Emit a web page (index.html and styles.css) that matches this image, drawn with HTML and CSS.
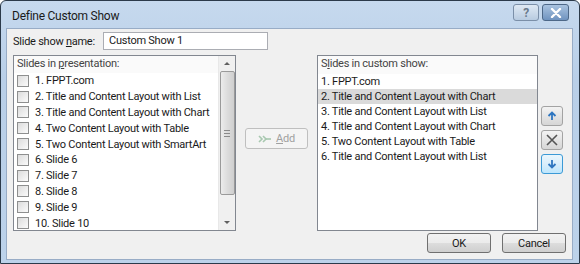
FILE: index.html
```html
<!DOCTYPE html>
<html lang="en">

<head>
    <meta charset="UTF-8">
    <title>Define Custom Show</title>
    <link rel="stylesheet" href="styles.css">
</head>

<body>
    <div class="window">
        <div class="titlebar">
            <span class="title">Define Custom Show</span>
            <div class="title-buttons">
                <span class="tb-btn tb-help">?</span>
                <span class="tb-btn tb-close">
                    <svg width="12" height="10" viewBox="0 0 12 10">
                        <path d="M2 1 L10 9 M10 1 L2 9" stroke="#fff" stroke-width="2.4" stroke-linecap="round" />
                    </svg>
                </span>
            </div>
        </div>

        <div class="client">
            <div class="name-row">
                <label class="name-label">Slide show <u>n</u>ame:</label>
                <div class="name-input">Custom Show 1</div>
            </div>

            <div class="main-row">
                <div class="listbox left-list">
                    <div class="list-content">
                        <div class="list-header">Slides in <u>p</u>resentation:</div>
                        <div class="check-item"><span class="check"></span>1. FPPT.com</div>
                        <div class="check-item"><span class="check"></span>2. Title and Content Layout with List</div>
                        <div class="check-item"><span class="check"></span>3. Title and Content Layout with Chart</div>
                        <div class="check-item"><span class="check"></span>4. Two Content Layout with Table</div>
                        <div class="check-item"><span class="check"></span>5. Two Content Layout with SmartArt</div>
                        <div class="check-item"><span class="check"></span>6. Slide 6</div>
                        <div class="check-item"><span class="check"></span>7. Slide 7</div>
                        <div class="check-item"><span class="check"></span>8. Slide 8</div>
                        <div class="check-item"><span class="check"></span>9. Slide 9</div>
                        <div class="check-item"><span class="check"></span>10. Slide 10</div>
                    </div>
                    <div class="scrollbar">
                        <span class="arrow-up"></span>
                        <div class="thumb"><span class="grip"></span></div>
                        <span class="arrow-down"></span>
                    </div>
                </div>

                <div class="add-col">
                    <div class="add-btn">
                        <svg width="14" height="8" viewBox="0 0 14 8">
                            <path d="M1 1 L4 4 L1 7 M5 1 L8 4 L5 7" stroke="#a8c8b0" stroke-width="1.6" fill="none" />
                            <path d="M8 4 H13" stroke="#a8c8b0" stroke-width="1.6" />
                        </svg>
                        <span><u>A</u>dd</span>
                    </div>
                </div>

                <div class="listbox right-list">
                    <div class="list-header">S<u>l</u>ides in custom show:</div>
                    <div class="item">1. FPPT.com</div>
                    <div class="item selected">2. Title and Content Layout with Chart</div>
                    <div class="item">3. Title and Content Layout with List</div>
                    <div class="item">4. Title and Content Layout with Chart</div>
                    <div class="item">5. Two Content Layout with Table</div>
                    <div class="item">6. Title and Content Layout with List</div>
                </div>

                <div class="move-col">
                    <div class="move-btn">
                        <svg width="10" height="10" viewBox="0 0 10 10">
                            <path d="M5 9 V2 M1.5 5 L5 1.5 L8.5 5" stroke="#2f76c0" stroke-width="1.8" fill="none" />
                        </svg>
                    </div>
                    <div class="move-btn">
                        <svg width="14" height="14" viewBox="0 0 14 14">
                            <path d="M2 2 L12 12 M12 2 L2 12" stroke="#555" stroke-width="1.6" />
                        </svg>
                    </div>
                    <div class="move-btn focused">
                        <svg width="10" height="10" viewBox="0 0 10 10">
                            <path d="M5 1 V8 M1.5 5 L5 8.5 L8.5 5" stroke="#2f76c0" stroke-width="1.8" fill="none" />
                        </svg>
                    </div>
                </div>
            </div>

            <div class="button-row">
                <div class="btn">OK</div>
                <div class="btn">Cancel</div>
            </div>
        </div>
    </div>
</body>

</html>
```
FILE: styles.css
```css
body {
    margin: 0;
    padding: 0;
    width: 580px;
    height: 264px;
    overflow: hidden;
    font-family: Roboto, "Open Sans", sans-serif;
    font-size: 11px;
    letter-spacing: -0.25px;
    color: #1a1a1a;
    background-color: #fff;
    white-space: nowrap;
}

u {
    text-decoration: underline;
    text-underline-offset: 1px;
}

.window {
    box-sizing: border-box;
    width: 580px;
    height: 264px;
    border: 1px solid #2b3a4a;
    border-radius: 6px 6px 0 0;
    background: linear-gradient(to bottom, #c6d9ee 0%, #b9cfe8 30%, #bcd2ea 100%);
    display: flex;
    flex-direction: column;
}

.titlebar {
    height: 27px;
    display: flex;
    align-items: center;
    justify-content: space-between;
    padding: 0 10px 0 11px;
    box-sizing: border-box;
}

.title {
    font-size: 12px;
    color: #1a1a1a;
    margin-top: 2px;
}

.title-buttons {
    display: flex;
    gap: 3px;
    margin-top: -4px;
}

.tb-btn {
    height: 15px;
    border: 1px solid #7b8fa8;
    border-radius: 3px;
    display: flex;
    align-items: center;
    justify-content: center;
}

.tb-help {
    width: 24px;
    background: linear-gradient(to bottom, #dfe9f4, #b8cbe0);
    color: #6a7a8c;
    font-size: 12px;
    font-weight: bold;
}

.tb-close {
    width: 25px;
    background: linear-gradient(to bottom, #a9c3e0, #6f93bf);
    border-color: #4d6888;
}

.client {
    flex: 1;
    margin: 0 6px 3px 5px;
    border: 1px solid #98acc6;
    background-color: #f0f0f0;
    padding: 3px 6px 0 6px;
    display: flex;
    flex-direction: column;
}

.name-row {
    display: flex;
    align-items: center;
    height: 18px;
}

.name-label {
    width: 90px;
}

.name-input {
    box-sizing: border-box;
    width: 165px;
    height: 18px;
    border: 1px solid #abadb3;
    background-color: #fff;
    padding: 0 5px;
    line-height: 16px;
}

.main-row {
    display: flex;
    margin-top: 5px;
    height: 176px;
}

.listbox {
    box-sizing: border-box;
    height: 176px;
    border: 1px solid #828790;
    background-color: #fff;
}

.left-list {
    width: 223px;
    display: flex;
}

.list-content {
    flex: 1;
    overflow: hidden;
}

.list-header {
    height: 17.5px;
    line-height: 15px;
    padding-left: 3px;
    color: #444;
    background-color: #fafafa;
}

.left-list .list-header {
    height: 17px;
}

.check-item {
    display: flex;
    align-items: center;
    height: 15.8px;
    padding-left: 3px;
}

.check {
    box-sizing: border-box;
    width: 12px;
    height: 12px;
    border: 1px solid #8e8f8f;
    background: linear-gradient(135deg, #dcdcdc, #fbfbfb);
    margin-right: 6px;
    flex-shrink: 0;
}

.scrollbar {
    width: 16px;
    background-color: #f0f0f0;
    border-left: 1px solid #e8e8e8;
    display: flex;
    flex-direction: column;
    align-items: center;
}

.arrow-up,
.arrow-down {
    width: 0;
    height: 0;
    border-left: 3px solid transparent;
    border-right: 3px solid transparent;
    margin: 6px 0;
}

.arrow-up {
    border-bottom: 3px solid #606060;
}

.arrow-down {
    border-top: 3px solid #606060;
    margin-top: auto;
}

.thumb {
    box-sizing: border-box;
    width: 15px;
    height: 124px;
    border: 1px solid #9a9a9a;
    border-radius: 2px;
    background: linear-gradient(to right, #ececec, #dcdcdc 50%, #cfcfcf);
    display: flex;
    align-items: center;
    justify-content: center;
}

.grip {
    width: 6px;
    height: 5px;
    border-top: 1px solid #8a8a8a;
    border-bottom: 1px solid #8a8a8a;
}

.grip::after {
    content: "";
    display: block;
    height: 1px;
    margin-top: 2px;
    background-color: #8a8a8a;
}

.add-col {
    width: 81px;
    display: flex;
    align-items: center;
    justify-content: center;
}

.add-btn {
    box-sizing: border-box;
    width: 63px;
    height: 21px;
    border: 1px solid #bfbfbf;
    border-radius: 3px;
    background-color: #f4f4f4;
    color: #a0a0a0;
    display: flex;
    align-items: center;
    justify-content: center;
    gap: 4px;
    margin-top: -9px;
}

.right-list {
    width: 221px;
}

.item {
    height: 15.2px;
    line-height: 15px;
    padding-left: 3px;
}

.item.selected {
    background-color: #dadada;
}

.move-col {
    flex: 1;
    display: flex;
    flex-direction: column;
    align-items: center;
    justify-content: center;
    gap: 4px;
    margin-top: -7px;
}

.move-btn {
    box-sizing: border-box;
    width: 22px;
    height: 20px;
    border: 1px solid #a3a3a3;
    border-radius: 3px;
    background: linear-gradient(to bottom, #f3f3f3, #e4e4e4 50%, #d6d6d6);
    display: flex;
    align-items: center;
    justify-content: center;
}

.move-btn.focused {
    border-color: #3c9ad6;
    background: linear-gradient(to bottom, #eaf6fd, #d9eefb 50%, #bde6fd);
}

.button-row {
    display: flex;
    justify-content: flex-end;
    gap: 11px;
    margin-top: 2px;
}

.btn {
    box-sizing: border-box;
    width: 64px;
    height: 20px;
    border: 1px solid #707070;
    border-radius: 3px;
    background: linear-gradient(to bottom, #f2f2f2, #ebebeb 50%, #dddddd 51%, #cfcfcf);
    display: flex;
    align-items: center;
    justify-content: center;
}
```
